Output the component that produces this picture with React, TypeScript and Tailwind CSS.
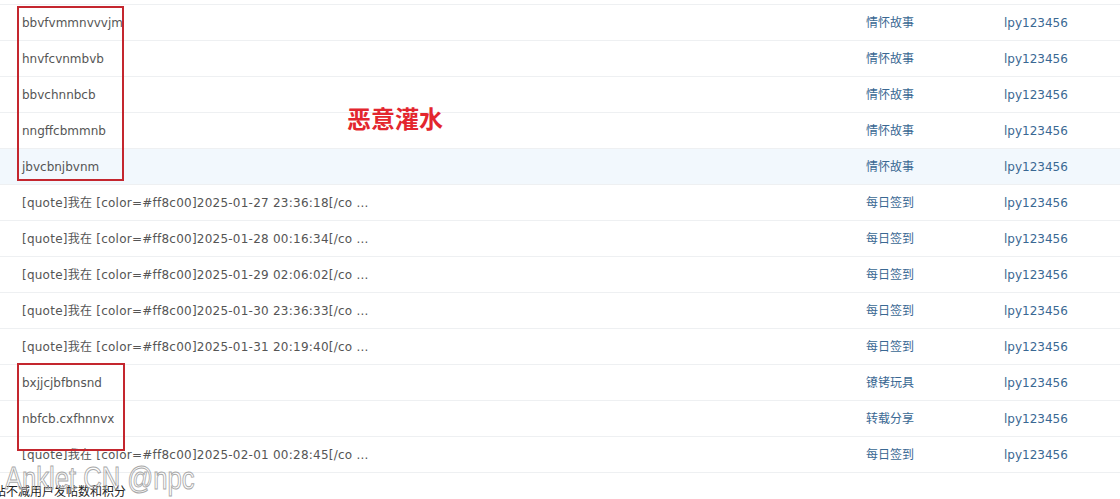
const rows = [
  { title: "bbvfvmmnvvvjm", cat: "情怀故事" },
  { title: "hnvfcvnmbvb", cat: "情怀故事" },
  { title: "bbvchnnbcb", cat: "情怀故事" },
  { title: "nngffcbmmnb", cat: "情怀故事" },
  { title: "jbvcbnjbvnm", cat: "情怀故事", active: true },
  { title: "[quote]我在 [color=#ff8c00]2025-01-27 23:36:18[/co ...", cat: "每日签到", quote: true },
  { title: "[quote]我在 [color=#ff8c00]2025-01-28 00:16:34[/co ...", cat: "每日签到", quote: true },
  { title: "[quote]我在 [color=#ff8c00]2025-01-29 02:06:02[/co ...", cat: "每日签到", quote: true },
  { title: "[quote]我在 [color=#ff8c00]2025-01-30 23:36:33[/co ...", cat: "每日签到", quote: true },
  { title: "[quote]我在 [color=#ff8c00]2025-01-31 20:19:40[/co ...", cat: "每日签到", quote: true },
  { title: "bxjjcjbfbnsnd", cat: "镣铐玩具" },
  { title: "nbfcb.cxfhnnvx", cat: "转载分享" },
  { title: "[quote]我在 [color=#ff8c00]2025-02-01 00:28:45[/co ...", cat: "每日签到", quote: true },
];

export default function App() {
  return (
    <div className="relative w-[1120px] h-[499px] overflow-hidden bg-white font-['DejaVu_Sans','Noto_Sans_CJK_SC',sans-serif] text-[12px]">
      <div className="h-[4px]" />
      <div className="border-b border-[#eef0f2]">
        {rows.map((row, i) => (
          <div
            key={i}
            className={`flex items-center h-[36px] border-t border-[#eef0f2] ${
              row.active ? "bg-[#f2f8fd]" : ""
            }`}
          >
            <div className={`flex-1 pl-[22px] text-[#555] ${row.quote ? "tracking-[0.24px]" : ""}`}>
              {row.title}
            </div>
            <div className="w-[138px] text-[#3a6893]">{row.cat}</div>
            <div className="w-[116px] text-[#3a6893]">lpy123456</div>
          </div>
        ))}
      </div>
      <p className="-ml-[6px] pt-[10px] leading-[18px] text-[#222]">站不减用户发帖数和积分</p>

      {/* annotations */}
      <div className="absolute left-[17px] top-[6px] w-[107px] h-[175px] border-2 border-[#c4262e]" />
      <div className="absolute left-[17px] top-[363px] w-[108px] h-[88px] border-2 border-[#c4262e]" />
      <div className="absolute left-[347px] top-[102px] text-[24px] leading-[32px] font-bold text-[#e3262e] font-['Noto_Sans_CJK_SC',sans-serif]">
        恶意灌水
      </div>
      <div className="absolute left-[5px] top-[458px] origin-left scale-x-[0.8] text-[32px] leading-[40px] text-transparent font-['Liberation_Sans',sans-serif] [-webkit-text-stroke:1px_#a8a8a8]">
        Anklet CN @npc
      </div>
    </div>
  );
}
